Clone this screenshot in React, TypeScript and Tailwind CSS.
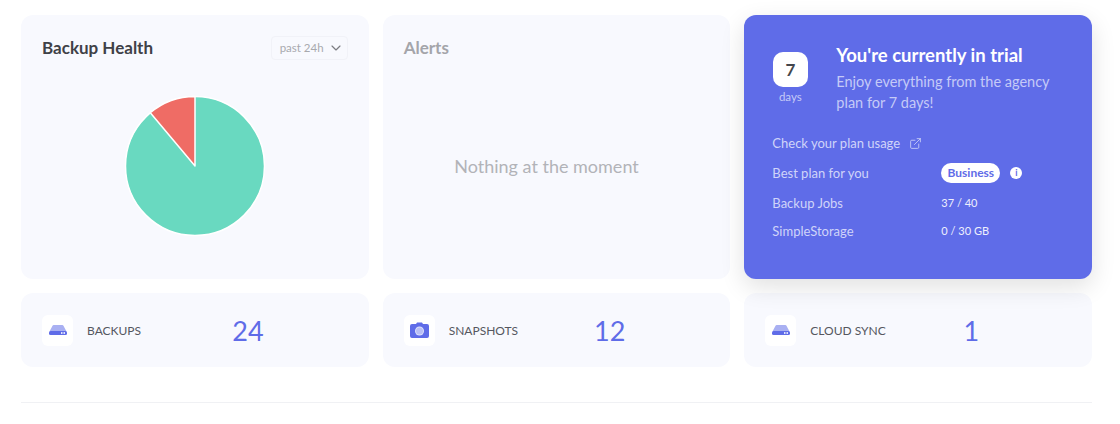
import { ChevronDown, ExternalLink } from "lucide-react";

function DriveIcon() {
  return (
    <svg className="h-[10px] w-[18px]" viewBox="0 0 18 10">
      <path d="M3.4 1a1.5 1.5 0 0 1 1.4-1h8.4a1.5 1.5 0 0 1 1.4 1L17.5 6.5H0.5z" fill="#a9b0f2" />
      <rect x="0" y="6" width="18" height="4" rx="1.5" fill="#5f6ce8" />
      <rect x="12" y="7" width="1.5" height="2" fill="#dfe2fb" />
      <rect x="14.5" y="7" width="1.5" height="2" fill="#dfe2fb" />
    </svg>
  );
}

function CameraIcon() {
  return (
    <svg className="h-[16px] w-[19px]" viewBox="0 0 19 16">
      <path d="M6 2 7 0.5h5L13 2h4a2 2 0 0 1 2 2v10a2 2 0 0 1-2 2H2a2 2 0 0 1-2-2V4a2 2 0 0 1 2-2z" fill="#5f6ce8" />
      <circle cx="9.5" cy="9" r="4.5" fill="#dfe2fb" />
      <circle cx="9.5" cy="9" r="3.5" fill="#b9bff6" />
    </svg>
  );
}

function PieChart() {
  return (
    <svg className="h-[142px] w-[142px]" viewBox="-71 -71 142 142">
      <circle r="69.5" fill="#69d9c0" stroke="#ffffff" strokeWidth="1.5" />
      <path d="M0 0 L0 -69.5 A69.5 69.5 0 0 0 -44.7 -53.2 Z" fill="#ef6c65" stroke="#ffffff" strokeWidth="1.5" strokeLinejoin="round" />
    </svg>
  );
}

function StatCard({ icon, label, value }: { icon: React.ReactNode; label: string; value: string }) {
  return (
    <div className="flex h-[74px] items-center rounded-xl bg-[#f8f9fe] pl-[21px]">
      <div className="flex h-[31px] w-[31px] items-center justify-center rounded-md bg-white">{icon}</div>
      <span className="ml-[14px] w-[131px] pt-px text-[12px] text-[#55575f]">{label}</span>
      <span className="w-[60px] text-center text-[27px] leading-none text-[#5f6ce8]">{value}</span>
    </div>
  );
}

export default function App() {
  return (
    <div className="h-[424px] w-[1120px] overflow-hidden bg-white pl-[21px] pt-[15px] font-['Lato','Noto_Sans',sans-serif]">
      <div className="grid w-[1071px] grid-cols-3 gap-x-[14px] gap-y-[14px]">
        {/* Backup health */}
        <div className="flex h-[264px] flex-col rounded-xl bg-[#f8f9fe] px-[21px] pt-[20px]">
          <div className="flex items-center justify-between">
            <h2 className="text-[17px] font-bold text-[#3f4147]">Backup Health</h2>
            <div className="flex h-6 w-[77px] items-center justify-between rounded border border-[#f1f2f8] pl-2 pr-[3px] text-[11.5px] text-[#a8a9ae]">
              past 24h
              <ChevronDown className="h-4 w-4 text-[#7b7c82]" strokeWidth={1.75} />
            </div>
          </div>
          <div className="mt-[34px] flex justify-center">
            <PieChart />
          </div>
        </div>

        {/* Alerts */}
        <div className="flex h-[264px] flex-col rounded-xl bg-[#f8f9fe] pl-[21px] pr-[41px] pt-[20px]">
          <h2 className="text-[17px] font-bold text-[#a4a5aa]">Alerts</h2>
          <div className="mt-[92px] text-center text-[18px] text-[#b2b3b8]">Nothing at the moment</div>
        </div>

        {/* Trial */}
        <div className="relative z-10 h-[264px] rounded-xl bg-[#5f6ce8] pl-7 pr-4 pt-[28px] shadow-[0_8px_24px_rgba(0,0,0,0.12)]">
          <div className="flex">
            <div className="flex w-[36px] flex-col items-center pt-[9px]">
              <div className="flex h-[35px] w-[35px] items-center justify-center rounded-[10px] bg-white text-[17px] font-bold text-[#44464c]">7</div>
              <span className="mt-[1px] text-[11.5px] text-[#c5caf7]">days</span>
            </div>
            <div className="ml-[28px]">
              <h2 className="text-[18.5px] font-bold leading-6 text-white">You're currently in trial</h2>
              <p className="mt-[4px] w-[230px] text-[14.5px] leading-[21px] text-[#c5caf7]">Enjoy everything from the agency plan for 7 days!</p>
            </div>
          </div>
          <div className="mt-[20px] flex items-center text-[13px] leading-5 text-[#d0d4f9]">
            Check your plan usage
            <ExternalLink className="ml-[9px] h-[13px] w-[13px]" strokeWidth={1.5} />
          </div>
          <div className="mt-[10px] grid grid-cols-[169px_1fr] items-center text-[13px] leading-5 text-[#d0d4f9]">
            <span>Best plan for you</span>
            <div className="-mt-px flex items-center">
              <span className="flex h-5 w-[59px] items-center justify-center rounded-full bg-white text-[12px] font-bold text-[#5f6ce8]">Business</span>
              <span className="ml-[10px] flex h-[12px] w-[12px] items-center justify-center rounded-full bg-white text-[9px] font-bold leading-none text-[#5f6ce8]">i</span>
            </div>
            <span className="mt-[10px]">Backup Jobs</span>
            <span className="mt-[10px] text-[11px] text-[#eef0fd]">37 / 40</span>
            <span className="mt-[8px]">SimpleStorage</span>
            <span className="mt-[8px] text-[11px] text-[#eef0fd]">0 / 30 GB</span>
          </div>
        </div>

        <StatCard icon={<DriveIcon />} label="BACKUPS" value="24" />
        <StatCard icon={<CameraIcon />} label="SNAPSHOTS" value="12" />
        <StatCard icon={<DriveIcon />} label="CLOUD SYNC" value="1" />
      </div>
      <div className="mt-[35px] h-px w-[1071px] bg-[#f0f1f4]" />
    </div>
  );
}
